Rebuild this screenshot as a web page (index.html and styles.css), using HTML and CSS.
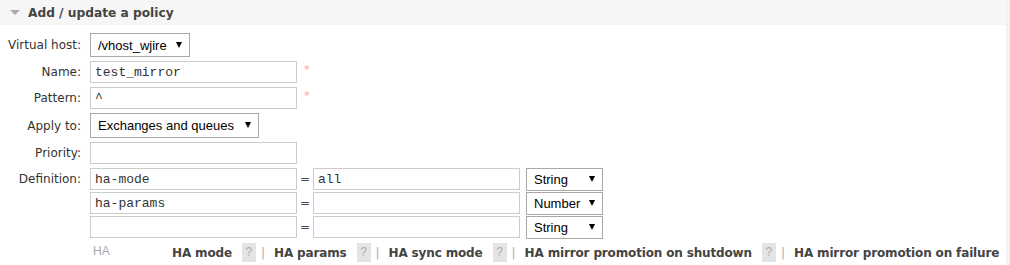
FILE: index.html
```html
<!DOCTYPE html>
<html lang="en">
<head>
  <meta charset="UTF-8">
  <title>Add / update a policy</title>
  <link rel="stylesheet" href="styles.css">
</head>
<body>
  <div class="section">
    <h2 class="section-title"><span class="toggle"></span>Add / update a policy</h2>

    <form class="policy-form">
      <div class="row">
        <label class="label">Virtual host:</label>
        <span class="select-wrap vhost">
          <select><option>/vhost_wjire</option></select>
        </span>
      </div>

      <div class="row">
        <label class="label">Name:</label>
        <input class="text" type="text" value="test_mirror">
        <span class="mand">*</span>
      </div>

      <div class="row">
        <label class="label">Pattern:</label>
        <input class="text" type="text" value="^">
        <span class="mand">*</span>
      </div>

      <div class="row">
        <label class="label">Apply to:</label>
        <span class="select-wrap apply">
          <select><option>Exchanges and queues</option></select>
        </span>
      </div>

      <div class="row">
        <label class="label">Priority:</label>
        <input class="text" type="text" value="">
      </div>

      <div class="row def">
        <label class="label">Definition:</label>
        <div class="pairs">
          <div class="pair">
            <input class="text" type="text" value="ha-mode">
            <span class="eq">=</span>
            <input class="text" type="text" value="all">
            <span class="select-wrap type"><select><option>String</option></select></span>
          </div>
          <div class="pair">
            <input class="text" type="text" value="ha-params">
            <span class="eq">=</span>
            <input class="text" type="text" value="">
            <span class="select-wrap type"><select><option>Number</option></select></span>
          </div>
          <div class="pair">
            <input class="text" type="text" value="">
            <span class="eq">=</span>
            <input class="text" type="text" value="">
            <span class="select-wrap type"><select><option>String</option></select></span>
          </div>
        </div>
      </div>

      <div class="helpers">
        <span class="group">HA</span>
        <span class="links">
          <span class="arg">HA mode</span><span class="help">?</span><span class="sep">|</span>
          <span class="arg">HA params</span><span class="help">?</span><span class="sep">|</span>
          <span class="arg">HA sync mode</span><span class="help">?</span><span class="sep">|</span>
          <span class="arg">HA mirror promotion on shutdown</span><span class="help">?</span><span class="sep">|</span>
          <span class="arg">HA mirror promotion on failure</span>
        </span>
      </div>
    </form>
  </div>
</body>
</html>
```

FILE: styles.css
```css
body, html {
  margin: 0;
  background: #fff;
  color: #444;
  font-family: "DejaVu Sans", Verdana, sans-serif;
  font-size: 12px;
}

.section {
  width: 1006px;
  overflow: hidden;
  height: 265px;
  border-right: 4px solid #f2f2f2;
}

.section-title {
  display: flex;
  align-items: center;
  height: 25px;
  margin: 0;
  padding-left: 10px;
  background: #f6f6f6;
  font-size: 12.2px;
  font-weight: bold;
  color: #444;
}

.toggle {
  width: 0;
  height: 0;
  margin-right: 8px;
  border-left: 5px solid transparent;
  border-right: 5px solid transparent;
  border-top: 5px solid #aaa;
}

.policy-form {
  margin-top: 8px;
}

.row {
  display: flex;
  align-items: center;
  margin-bottom: 4px;
}

.row.def {
  align-items: flex-start;
}

.label {
  width: 81px;
  padding-right: 9px;
  text-align: right;
  color: #333;
  flex-shrink: 0;
}

.row.def .label {
  line-height: 22px;
}

.text {
  box-sizing: border-box;
  width: 207px;
  height: 22px;
  margin: 0;
  padding: 0 4px;
  border: 1px solid #ccc;
  font-family: "Liberation Mono", "Courier New", monospace;
  font-size: 13px;
  color: #333;
  outline: none;
}

.mand {
  align-self: flex-start;
  margin-left: 7px;
  padding-top: 2px;
  color: #f4a0a0;
  font-size: 11px;
}

.select-wrap {
  position: relative;
  display: inline-block;
}

.select-wrap select {
  -webkit-appearance: none;
  appearance: none;
  box-sizing: border-box;
  height: 24px;
  margin: 0;
  padding: 0 0 0 7px;
  border: 1px solid #a9a9a9;
  background: #fff;
  font-family: "Liberation Sans", Arial, sans-serif;
  font-size: 13px;
  color: #000;
}

.select-wrap::after {
  content: "";
  position: absolute;
  right: 8px;
  top: 9px;
  border-left: 3.5px solid transparent;
  border-right: 3.5px solid transparent;
  border-top: 6px solid #000;
  pointer-events: none;
}

.vhost select { width: 100px; }
.apply select { width: 169px; height: 25px; }

.pairs {
  display: flex;
  flex-direction: column;
  gap: 2px;
}

.pair {
  display: flex;
  align-items: flex-start;
  height: 22px;
}

.eq {
  width: 16px;
  line-height: 22px;
  text-align: center;
  color: #444;
}

.type {
  margin-left: 6px;
}

.type select {
  width: 77px;
  height: 23px;
}

.type::after {
  top: 8px;
}

.helpers {
  display: flex;
  align-items: center;
  margin-top: 5px;
  white-space: nowrap;
}

.group {
  flex-shrink: 0;
  width: 79px;
  padding-left: 93px;
  margin-top: -4px;
  font-family: "Liberation Sans", Arial, sans-serif;
  font-size: 12px;
  color: #aaa;
}

.links {
  display: flex;
  align-items: center;
  color: #444;
}

.arg {
  flex-shrink: 0;
  font-weight: bold;
  font-size: 12px;
  letter-spacing: -0.15px;
  margin-right: 10px;
}

.help {
  flex-shrink: 0;
  display: inline-block;
  width: 14px;
  height: 19px;
  margin-right: 5px;
  line-height: 19px;
  text-align: center;
  background: #e4e4e4;
  color: #aaa;
  font-family: "Liberation Sans", Arial, sans-serif;
}

.sep {
  color: #aaa;
  margin-right: 9px;
}
```
